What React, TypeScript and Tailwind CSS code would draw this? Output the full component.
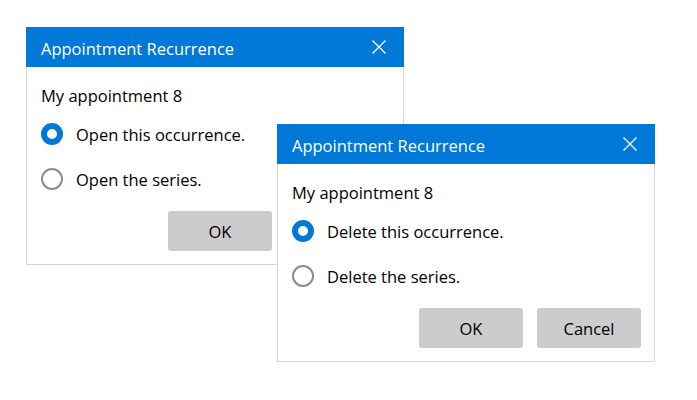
import React from "react";

type DialogProps = {
  verb: string;
  showCancel: boolean;
};

function CloseIcon() {
  return (
    <svg width="14" height="14" viewBox="0 0 14 14" className="block">
      <path d="M0.5 0.5 L13.5 13.5 M13.5 0.5 L0.5 13.5" stroke="#ffffff" strokeWidth="1.3" fill="none" />
    </svg>
  );
}

function Radio({ checked, label }: { checked: boolean; label: string }) {
  return (
    <div className="flex h-[45px] items-center">
      {checked ? (
        <div className="h-[22px] w-[22px] shrink-0 rounded-full border-[6.5px] border-[#0078d7] bg-white" />
      ) : (
        <div className="h-[22px] w-[22px] shrink-0 rounded-full border-2 border-[#8c8c8c] bg-white" />
      )}
      <span className="ml-[13px] mt-[2px] leading-[24px]">{label}</span>
    </div>
  );
}

function Dialog({ verb, showCancel }: DialogProps) {
  return (
    <div className="flex h-[238px] w-[378px] flex-col bg-white">
      <div className="flex h-[40px] items-center justify-between bg-[#0078d7] pl-[15px] pr-[18px] text-white">
        <span className="mt-[4px] leading-[24px]">Appointment Recurrence</span>
        <CloseIcon />
      </div>
      <div className="flex flex-1 flex-col border-x border-b border-[#d6d6d6] pl-[14px] pr-[13px] pt-[17px]">
        <div className="leading-[24px]">My appointment 8</div>
        <div className="mt-[3px] flex flex-col">
          <Radio checked label={`${verb} this occurrence.`} />
          <Radio checked={false} label={`${verb} the series.`} />
        </div>
        <div className="mt-[10px] flex justify-end gap-[14px]">
          <div className="flex h-[40px] w-[104px] items-center justify-center rounded-[3px] bg-[#cccccc] pt-[2px]">OK</div>
          <div
            className={
              showCancel
                ? "flex h-[40px] w-[104px] items-center justify-center rounded-[3px] bg-[#cccccc] pt-[2px]"
                : "invisible flex h-[40px] w-[104px] items-center justify-center rounded-[3px] bg-[#cccccc] pt-[2px]"
            }
          >
            Cancel
          </div>
        </div>
      </div>
    </div>
  );
}

export default function App() {
  return (
    <div
      className="relative h-[400px] w-[697px] overflow-hidden bg-white text-[16.5px] text-black"
      style={{ fontFamily: '"Open Sans", "Noto Sans", sans-serif' }}
    >
      <div className="absolute left-[26px] top-[27px]">
        <Dialog verb="Open" showCancel={false} />
      </div>
      <div className="absolute left-[277px] top-[124px]">
        <Dialog verb="Delete" showCancel />
      </div>
    </div>
  );
}
